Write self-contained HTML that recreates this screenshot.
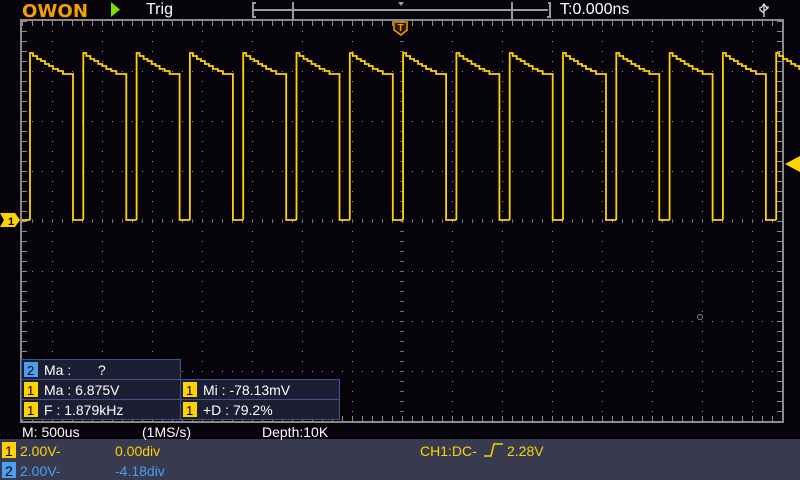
<!DOCTYPE html>
<html><head><meta charset="utf-8"><style>
body{margin:0;width:800px;height:480px;background:#07030a;overflow:hidden;position:relative;font-family:"Liberation Sans",sans-serif}
.t{position:absolute;white-space:nowrap}
</style></head><body>
<svg width="800" height="480" style="position:absolute;left:0;top:0">
<defs>
<path id="p" d="M0,220 V53 H3 V56 H7 V59 H11 V61 H15 V64 H19 V66 H23 V69 H28 V71 H33 V74 H43 V220 H53.3" fill="none" stroke="#ffd200" stroke-width="1.8"/>
<pattern id="dv" x="52" y="21" width="50" height="10" patternUnits="userSpaceOnUse"><rect x="0" y="0" width="1" height="1" fill="#9a9a9a"/></pattern>
<pattern id="dh" x="22" y="21" width="10" height="50" patternUnits="userSpaceOnUse"><rect x="0" y="0" width="1" height="1" fill="#9a9a9a"/></pattern>
<pattern id="tt" x="22" y="0" width="10" height="10" patternUnits="userSpaceOnUse"><rect x="0" y="0" width="1" height="10" fill="#8a8a8a"/></pattern>
<pattern id="tl" x="0" y="21" width="10" height="10" patternUnits="userSpaceOnUse"><rect x="0" y="0" width="10" height="1" fill="#8a8a8a"/></pattern>
</defs>
<rect x="22" y="22" width="760" height="399" fill="url(#dv)"/>
<rect x="22" y="22" width="760" height="399" fill="url(#dh)"/>
<rect x="22" y="21" width="760" height="5" fill="url(#tt)"/>
<rect x="22" y="416" width="760" height="5" fill="url(#tt)"/>
<rect x="22" y="21" width="5" height="400" fill="url(#tl)"/>
<rect x="777" y="21" width="5" height="400" fill="url(#tl)"/>
<rect x="22" y="219" width="760" height="4" fill="url(#tt)" opacity="0.7"/>
<rect x="400" y="21" width="4" height="400" fill="url(#tl)" opacity="0.7"/>
<rect x="21" y="20" width="762" height="402" fill="none" stroke="#8a8a8a" stroke-width="2"/>
<g>
<use href="#p" x="30"/><use href="#p" x="83.3"/><use href="#p" x="136.6"/><use href="#p" x="189.9"/><use href="#p" x="243.2"/><use href="#p" x="296.5"/><use href="#p" x="349.8"/><use href="#p" x="403.1"/><use href="#p" x="456.4"/><use href="#p" x="509.7"/><use href="#p" x="563"/><use href="#p" x="616.3"/><use href="#p" x="669.6"/><use href="#p" x="722.9"/><use href="#p" x="776.2"/>
<path d="M22,220 H30" stroke="#ffd200" stroke-width="1.8"/>
</g>
<polygon points="111,2 120,9.5 111,17" fill="#7be000"/>
<path d="M256,3 H253 V17 H256 M253,10 H548 M548,3 H550 V17 H547" stroke="#9a9a9a" stroke-width="2" fill="none"/>
<path d="M293,2 V19 M512,2 V19" stroke="#9a9a9a" stroke-width="2"/>
<polygon points="398,2 404,2 401,6" fill="#9a9a9a"/>
<path d="M394,22 H407 V30 L401,35 L394,30 Z" fill="#2a1500" stroke="#f0a000" stroke-width="1.5"/>
<text x="400.5" y="31" font-family="Liberation Sans" font-size="10" font-weight="bold" fill="#f0a000" text-anchor="middle">T</text>
<path d="M764,4 V17 M761,8 L764,4 L767,8 M764,13 L760,10 V7 M764,11 L768,8 V6" stroke="#ddd" stroke-width="1.3" fill="none"/>
<polygon points="800,156 800,172 785,164 " fill="#ffd200"/>
<polygon points="0,213 15,213 20,220 15,227 0,227 4,220" fill="#ffd200"/>
<text x="8" y="225" font-size="11" font-weight="bold" fill="#000">1</text>
<circle cx="700" cy="317" r="2.5" fill="none" stroke="#888" stroke-width="1"/>
<g stroke="#3f5488" stroke-width="1" fill="#1c1f33">
<rect x="21.5" y="359.5" width="159" height="20"/>
<rect x="21.5" y="379.5" width="159" height="20"/>
<rect x="21.5" y="399.5" width="159" height="20"/>
<rect x="180.5" y="379.5" width="159" height="20"/>
<rect x="180.5" y="399.5" width="159" height="20"/>
</g>
<rect x="24" y="362" width="14" height="15" fill="#4aa0f0"/>
<rect x="24" y="382" width="14" height="15" fill="#ffd200"/>
<rect x="24" y="402" width="14" height="15" fill="#ffd200"/>
<rect x="183" y="382" width="14" height="15" fill="#ffd200"/>
<rect x="183" y="402" width="14" height="15" fill="#ffd200"/>
<g font-size="13" font-family="Liberation Sans" fill="#000">
<text x="27" y="375">2</text><text x="27" y="395">1</text><text x="27" y="415">1</text><text x="186" y="395">1</text><text x="186" y="415">1</text>
</g>
<g font-size="14" font-family="Liberation Sans" fill="#fff">
<text x="44" y="375">Ma :</text><text x="98" y="375">?</text>
<text x="44" y="395">Ma : 6.875V</text>
<text x="44" y="415">F : 1.879kHz</text>
<text x="203" y="395">Mi : -78.13mV</text>
<text x="203" y="415">+D : 79.2%</text>
</g>
<rect x="0" y="439" width="800" height="41" fill="#383a50"/>
<g font-size="14" font-family="Liberation Sans">
<text x="22" y="437" fill="#fff">M: 500us</text>
<text x="142" y="437" fill="#fff">(1MS/s)</text>
<text x="262" y="437" fill="#fff">Depth:10K</text>
<rect x="2" y="442" width="14" height="16" fill="#ffd200"/>
<text x="5" y="456" fill="#000">1</text>
<text x="20" y="456" fill="#ffd200">2.00V-</text>
<text x="115" y="456" fill="#ffd200">0.00div</text>
<rect x="2" y="462" width="14" height="16" fill="#4aa0f0"/>
<text x="5" y="476" fill="#000">2</text>
<text x="20" y="476" fill="#4aa0f0">2.00V-</text>
<text x="115" y="476" fill="#4aa0f0">-4.18div</text>
<text x="420" y="456" fill="#ffd200">CH1:DC-</text>
<path d="M484,456 H491 L494,444 H503" stroke="#ffd200" stroke-width="1.5" fill="none"/>
<text x="507" y="456" fill="#ffd200">2.28V</text>
</g>
<text x="22" y="17" font-family="DejaVu Sans" font-size="18" font-weight="bold" fill="#f0a000" textLength="66" lengthAdjust="spacingAndGlyphs">OWON</text>
</svg>
<div class="t" style="left:146px;top:1px;font-size:16px;color:#fff">Trig</div>
<div class="t" style="left:560px;top:1px;font-size:16px;color:#fff">T:0.000ns</div>
</body></html>
